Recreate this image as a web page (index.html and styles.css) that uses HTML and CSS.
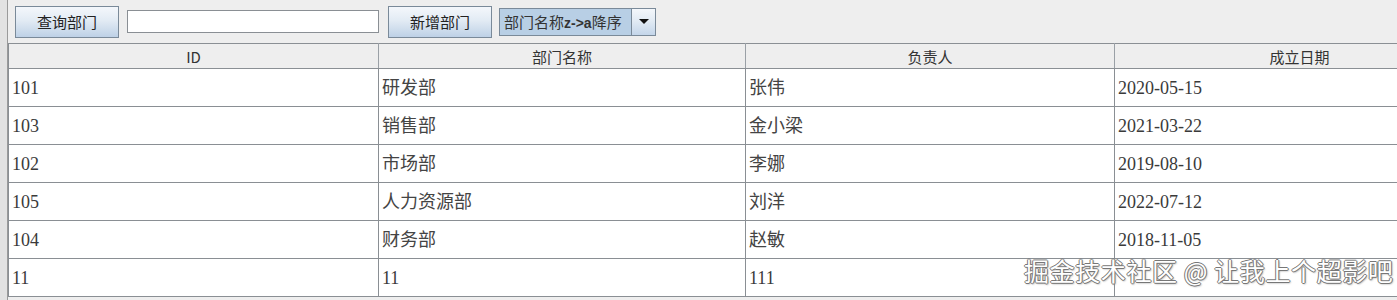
FILE: index.html
```html
<!DOCTYPE html>
<html lang="zh-CN">
<head>
    <meta charset="UTF-8">
    <title>部门管理</title>
    <link rel="stylesheet" href="styles.css">
</head>
<body>
    <div class="edge"></div>
    <div class="main">
        <div class="toolbar">
            <button class="btn">查询部门</button>
            <input class="field" type="text">
            <button class="btn">新增部门</button>
            <div class="combo">
                <span class="combo-value">部门名称<b>z-&gt;a</b>降序</span>
                <span class="combo-arrow"></span>
            </div>
        </div>

        <table class="grid">
            <colgroup>
                <col class="c1"><col class="c2"><col class="c3"><col class="c4">
            </colgroup>
            <thead>
                <tr><th>ID</th><th>部门名称</th><th>负责人</th><th>成立日期</th></tr>
            </thead>
            <tbody>
                <tr><td>101</td><td class="zh">研发部</td><td class="zh">张伟</td><td>2020-05-15</td></tr>
                <tr><td>103</td><td class="zh">销售部</td><td class="zh">金小梁</td><td>2021-03-22</td></tr>
                <tr><td>102</td><td class="zh">市场部</td><td class="zh">李娜</td><td>2019-08-10</td></tr>
                <tr><td>105</td><td class="zh">人力资源部</td><td class="zh">刘洋</td><td>2022-07-12</td></tr>
                <tr><td>104</td><td class="zh">财务部</td><td class="zh">赵敏</td><td>2018-11-05</td></tr>
                <tr><td>11</td><td>11</td><td>111</td><td></td></tr>
            </tbody>
        </table>
    </div>

    <div class="watermark">掘金技术社区 @ 让我上个超影吧</div>
</body>
</html>
```

FILE: styles.css
```css
html, body {
    margin: 0;
    height: 300px;
    overflow: hidden;
}
body {
    display: flex;
    background-color: #eeeeee;
    font-family: "Noto Sans CJK SC", sans-serif;
    color: #333;
}
.edge {
    width: 7px;
    flex: none;
    background-color: #e2e2e2;
    border-right: 1px solid #9a9a9a;
}
.main {
    flex: none;
}
.toolbar {
    display: flex;
    align-items: center;
    height: 43px;
    padding-left: 7px;
}
.btn {
    width: 104px;
    height: 32px;
    margin: 0;
    padding: 0;
    border: 1px solid #7a8a99;
    background: linear-gradient(#f4f7fb, #e2ebf4 45%, #bed1e6);
    font-family: "Noto Sans CJK SC", sans-serif;
    font-size: 15px;
    color: #222;
}
.field {
    width: 252px;
    height: 23px;
    box-sizing: border-box;
    margin: 0 9px 0 8px;
    padding: 0;
    border: 1px solid #8a8f94;
    background: white;
}
.combo {
    display: flex;
    height: 28px;
    margin-left: 7px;
    box-sizing: border-box;
    border: 1px solid #7a8a99;
}
.combo-value {
    width: 127px;
    padding-left: 4px;
    background-color: #b8cfe5;
    border-right: 1px solid #7a8a99;
    font-size: 15px;
    line-height: 26px;
    color: #333;
    white-space: nowrap;
}
.combo-value b {
    font-family: "Liberation Sans", sans-serif;
    font-weight: bold;
    font-size: 14px;
}
.combo-arrow {
    width: 23px;
    display: flex;
    align-items: center;
    justify-content: center;
    background: linear-gradient(#f4f7fb, #e2ebf4 45%, #c4d6ea);
}
.combo-arrow::before {
    content: "";
    border-left: 5px solid transparent;
    border-right: 5px solid transparent;
    border-top: 5px solid #111;
}
.grid {
    table-layout: fixed;
    border-collapse: collapse;
    width: 1476px;
    background: white;
    border-top: 1px solid #8a8f94;
    border-left: 1px solid #8a8f94;
}
.c1 { width: 370px; }
.c2 { width: 367px; }
.c3 { width: 369px; }
.c4 { width: 370px; }
.grid th {
    height: 24px;
    padding: 0;
    background-color: #eeeeee;
    border-right: 1px solid #9aa0a6;
    border-bottom: 1px solid #8a8f94;
    font-weight: normal;
    font-size: 15px;
    color: #333;
    text-align: center;
}
.grid tbody tr {
    height: 38px;
}
.grid td {
    padding: 0 0 0 3px;
    border-right: 1px solid #8a8f94;
    border-bottom: 1px solid #8a8f94;
    font-family: "Liberation Serif", "Noto Sans CJK SC", serif;
    font-size: 18px;
    line-height: 1;
    color: #3a3a3a;
    white-space: nowrap;
}
.grid td.zh {
    font-family: "Noto Sans CJK SC", sans-serif;
    padding-bottom: 4px;
    color: #444;
}
.watermark {
    position: absolute;
    left: 1024px;
    top: 252px;
    font-size: 25px;
    letter-spacing: 0.6px;
    color: white;
    white-space: nowrap;
    text-shadow: 1px 0 #777, -1px 0 #777, 0 1px #777, 0 -1px #777, 1px 1px 2px #888;
}
```
